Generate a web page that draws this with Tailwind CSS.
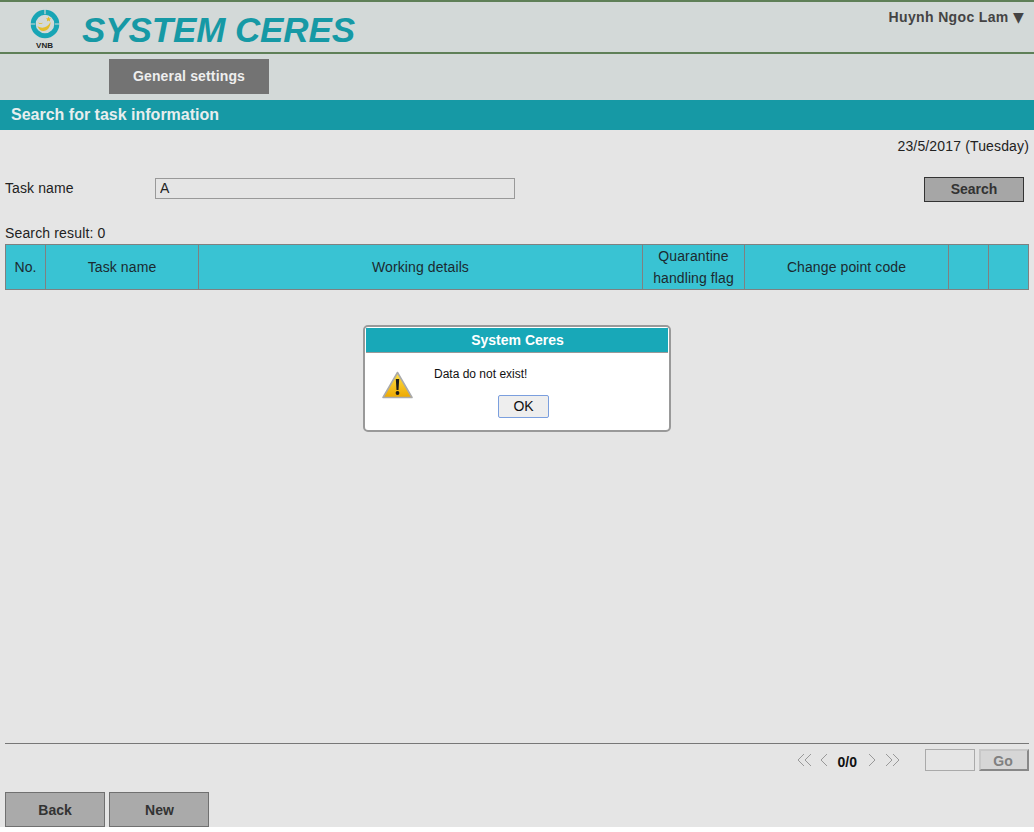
<!DOCTYPE html>
<html lang="en">
<head>
    <meta charset="UTF-8">
    <meta name="viewport" content="width=device-width, initial-scale=1.0">
    <title>System Ceres</title>
    <script src="https://cdn.jsdelivr.net/npm/@tailwindcss/browser@4"></script>
</head>
<body class="bg-white font-['Liberation_Sans',Arial,sans-serif] text-[14px] text-[#222]">

    <div class="relative h-[827px] overflow-hidden bg-[#e5e5e5] flex flex-col">

        <!-- Header -->
        <header class="h-[54px] shrink-0 bg-[#d3d9d8] border-t-2 border-b-2 border-[#5f8058] flex justify-between">
            <div class="flex">
                <div class="w-[82px] pl-[29px] pt-[7px] flex flex-col">
                    <svg width="32" height="32" viewBox="0 0 32 32">
                        <circle cx="16" cy="15" r="11.8" fill="none" stroke="#18a5b5" stroke-width="5"/>
                        <path d="M1 15h5M26 15h5M16 0v5" stroke="#d3d9d8" stroke-width="1.200"/>
                        <path d="M8.500 17c4 3 10 2 13-4 0 5-3 9-7 9-3 0-5-2-6-5z" fill="#e3bd2c"/>
                        <path d="M9 13.500c1.500 1 3.500 1 5 .3-1.500 1.700-3.500 1.700-5-.3z" fill="#e3bd2c"/>
                        <path d="M19.500 7.500l.8 1.700 1.800.2-1.300 1.200.3 1.800-1.600-.9-1.600.9.3-1.800-1.300-1.200 1.800-.2z" fill="#e3bd2c"/>
                    </svg>
                    <span class="w-[31px] text-center text-[8px] leading-[9px] font-bold text-[#222]">VNB</span>
                </div>
                <h1 class="text-[35px] leading-[56px] font-bold italic text-[#1699a5] tracking-[-0.1px]">SYSTEM CERES</h1>
            </div>
            <div class="pt-[5px] pr-[10px] font-bold text-[#444] tracking-[0.35px]">Huynh Ngoc Lam <span class="font-['DejaVu_Sans']">▼</span></div>
        </header>

        <!-- Menu -->
        <nav class="h-[46px] shrink-0 bg-[#d3d9d8] pl-[109px] pt-[5px]">
            <div class="w-[160px] h-[35px] bg-[#737373] text-[#eee] font-bold tracking-[0.15px] flex items-center justify-center">General settings</div>
        </nav>

        <!-- Title bar -->
        <div class="h-[30px] shrink-0 bg-[#1699a5] px-[11px] text-[16px] leading-[29px] font-bold text-[#e8eeee]">Search for task information</div>

        <main class="flex-1 flex flex-col px-[5px]">
            <div class="text-right leading-[16px] mt-[8px] tracking-[0.15px]">23/5/2017 (Tuesday)</div>

            <!-- Search form -->
            <div class="flex items-center mt-[22px] h-[24px] pr-[5px]">
                <label class="w-[150px] tracking-[0.1px]">Task name</label>
                <input type="text" value="A" class="w-[360px] h-[21px] px-[4px] border border-[#999] bg-[#e5e5e5] text-[14px] text-[#222] outline-none">
                <button class="ml-auto mt-[2px] w-[100px] h-[25px] bg-[#a6a6a6] border border-[#333] font-bold text-[#333]">Search</button>
            </div>

            <div class="mt-[25px] leading-[16px] h-[19px] tracking-[0.15px]">Search result: 0</div>

            <!-- Result table -->
            <table class="w-[1024px] h-[46px] table-fixed border-collapse bg-[#39c3d3] text-center text-[14px] leading-[22px] tracking-[0.1px] text-[#1c2a30]">
                <thead>
                    <tr>
                        <th class="w-[40px] border border-[#808080] font-normal">No.</th>
                        <th class="w-[153px] border border-[#808080] font-normal">Task name</th>
                        <th class="w-[444px] border border-[#808080] font-normal">Working details</th>
                        <th class="w-[102px] border border-[#808080] font-normal">Quarantine<br>handling flag</th>
                        <th class="w-[204px] border border-[#808080] font-normal">Change point code</th>
                        <th class="w-[40px] border border-[#808080] font-normal"></th>
                        <th class="w-[40px] border border-[#808080] font-normal"></th>
                    </tr>
                </thead>
            </table>

            <!-- Pager -->
            <div class="mt-auto border-t border-[#777] h-[49px] flex items-start justify-end pt-[5px]">
                <div class="flex items-center h-[22px] text-[#aaa]">
                    <svg width="16" height="14" viewBox="0 0 16 14" fill="none" stroke="#999" stroke-width="1"><path d="M7 1L1 7l6 6M14 1L8 7l6 6"/></svg>
                    <svg class="ml-[7px]" width="9" height="14" viewBox="0 0 9 14" fill="none" stroke="#999" stroke-width="1"><path d="M7 1L1 7l6 6"/></svg>
                    <span class="ml-[9px] mr-[10px] mt-[4px] font-bold text-[14px] text-[#111]">0/0</span>
                    <svg width="9" height="14" viewBox="0 0 9 14" fill="none" stroke="#999" stroke-width="1"><path d="M2 1l6 6-6 6"/></svg>
                    <svg class="ml-[8px]" width="16" height="14" viewBox="0 0 16 14" fill="none" stroke="#999" stroke-width="1"><path d="M2 1l6 6-6 6M9 1l6 6-6 6"/></svg>
                </div>
                <input type="text" class="ml-[25px] w-[50px] h-[22px] border border-[#aaa] bg-[#e5e5e5]">
                <button class="ml-[4px] w-[50px] h-[22px] pb-[1px] pr-[2px] bg-[#d6d6d6] border-2 border-t-[#c8c8c8] border-l-[#c8c8c8] border-r-[#888] border-b-[#888] font-bold text-[#808080]">Go</button>
            </div>

            <!-- Footer buttons -->
            <div class="flex gap-[4px] h-[35px] shrink-0">
                <button class="w-[100px] h-[35px] pt-[1px] bg-[#aaa] border border-[#707070] font-bold text-[#333]">Back</button>
                <button class="w-[100px] h-[35px] pt-[1px] pl-[1px] bg-[#aaa] border border-[#707070] font-bold text-[#333]">New</button>
            </div>
        </main>

        <!-- Message dialog -->
        <div class="absolute left-[363px] top-[325px] w-[308px] h-[107px] bg-white border-2 border-[#999] rounded-[5px] overflow-hidden">
            <div class="h-[25px] pl-[1px] bg-[#18a8b8] border-b border-[#999] text-center font-bold text-white leading-[24px] mx-[1px] mt-[1px]">System Ceres</div>
            <div class="flex pl-[17px] pt-[18px]">
                <svg width="31" height="28" viewBox="0 0 31 28">
                    <defs>
                        <linearGradient id="warn" x1="0" y1="0" x2="0" y2="1">
                            <stop offset="0" stop-color="#ffe24a"/>
                            <stop offset="1" stop-color="#eda800"/>
                        </linearGradient>
                    </defs>
                    <path d="M15.500 1.500L30 26.500H1z" fill="url(#warn)" stroke="#aaa" stroke-width="1.600" stroke-linejoin="round"/>
                    <path d="M13.800 8h3.400l-.7 11h-2z" fill="#1a1a1a"/>
                    <circle cx="15.500" cy="22" r="1.900" fill="#1a1a1a"/>
                </svg>
                <div class="ml-[21px] -mt-[4px] text-[12px] leading-[14px] text-[#111]">Data do not exist!</div>
            </div>
            <button class="absolute left-[133px] top-[68px] w-[51px] h-[23px] rounded-[2px] bg-[#eeeeee] border border-[#7b9fde] text-[14px] text-[#111]">OK</button>
        </div>
    </div>
</body>
</html>
